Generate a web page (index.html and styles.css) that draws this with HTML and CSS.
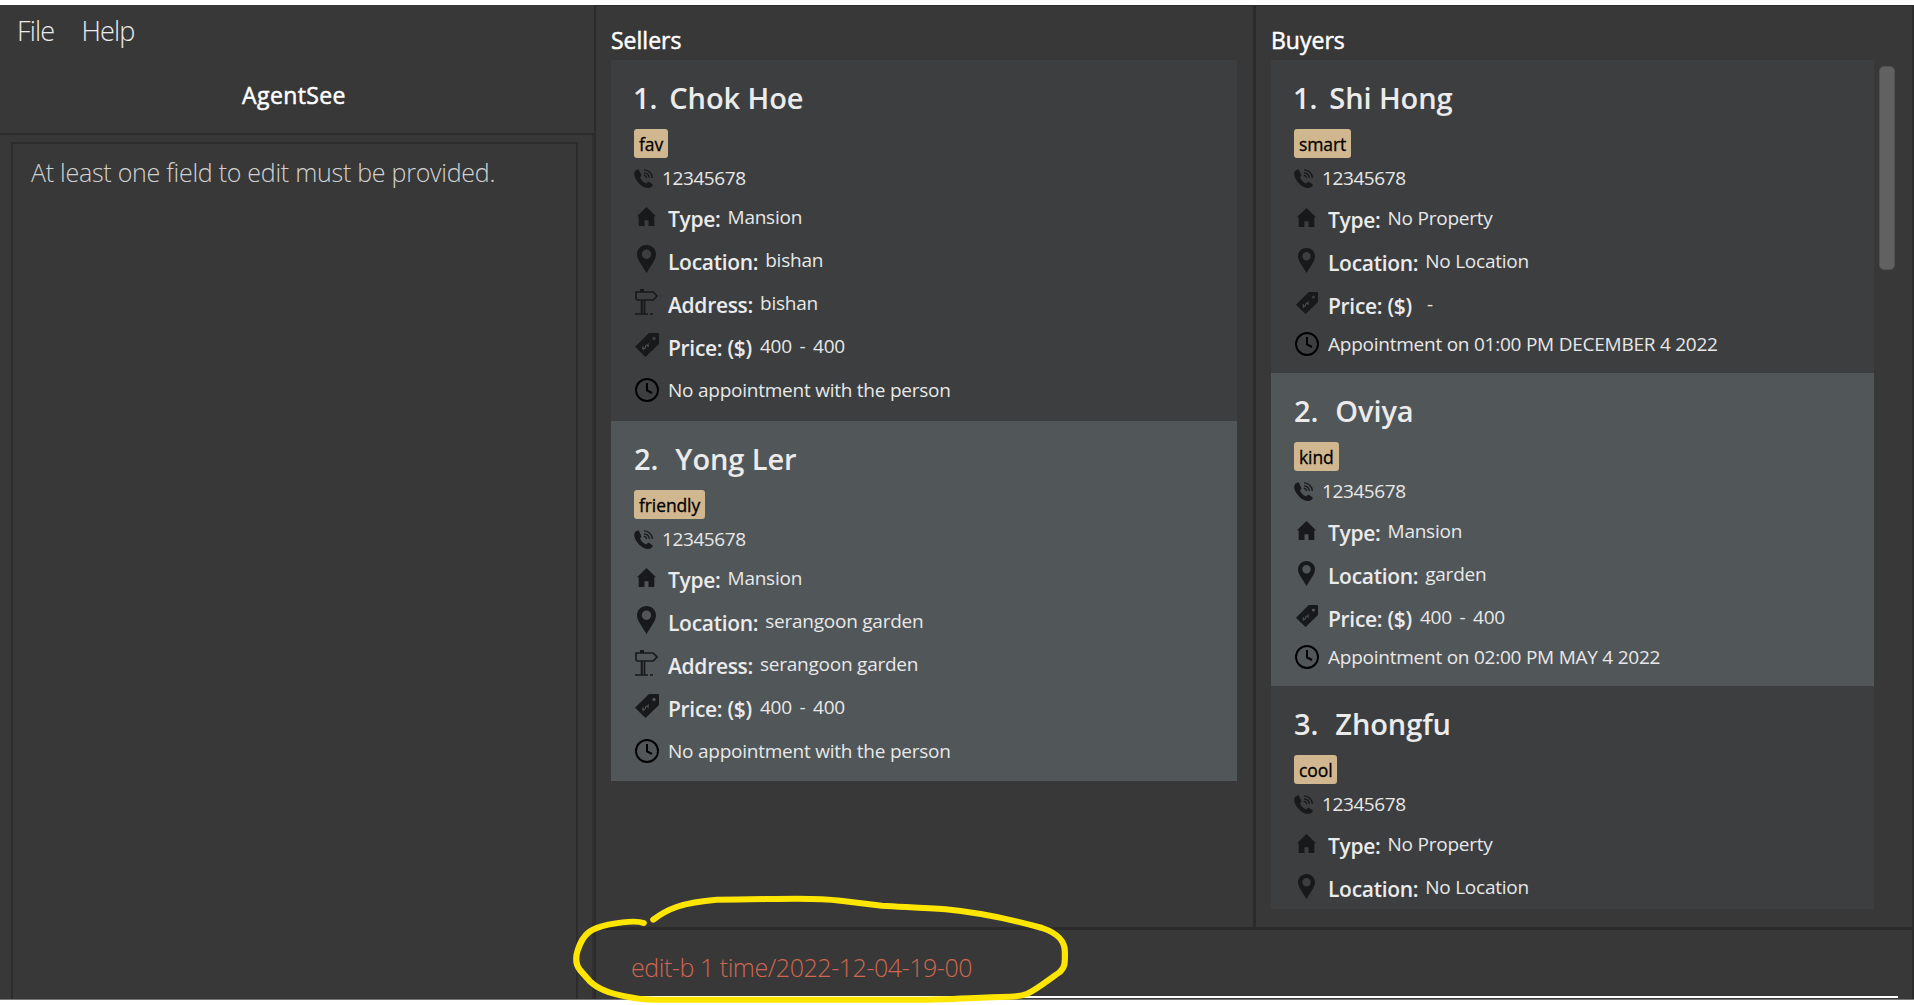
FILE: index.html
```
<!DOCTYPE html>
<html lang="en">
<head>
<meta charset="utf-8">
<title>AgentSee</title>
<link rel="stylesheet" href="styles.css">
</head>
<body>
<svg class="sprite" aria-hidden="true">
  <symbol id="phone" viewBox="0 0 19 19">
    <path d="M3.6.5 1 1.900C-.2 4-.1 6.600 1.300 9.300c2 4 5.200 7.300 9.100 9 2.800 1 5.300.9 7.200-.6.9-.8 1.300-1.600.9-2.400l-3.300-2.400c-.6-.3-1.200-.2-1.700.3l-1.300 1.300c-2.700-1-5.100-3.500-6.200-6.100l1-1.200c.4-.6.400-1.100.1-1.700L5 .9C4.600.300 4.100.200 3.600.5z" fill="currentColor"/>
    <path d="M10 .9c4.600.1 8.200 3.500 8.300 8M10 3.800c2.900.2 5.100 2.300 5.300 5.100M9.800 6.400c1.700.1 2.700 1.100 2.900 2.700" fill="none" stroke="currentColor" stroke-width="1.300"/>
  </symbol>
  <symbol id="house" viewBox="0 0 19 19">
    <path d="M9.500 0 19 9.300h-1.700V19h-5.800v-5.800h-4V19H1.700V9.300H0z" fill="currentColor"/>
  </symbol>
  <symbol id="pin" viewBox="0 0 19 28">
    <path fill-rule="evenodd" d="M9.500 0C4.200 0 0 4.100 0 9.300c0 2.400.8 4.500 2 6.700L9.500 28 17 16c1.200-2.200 2-4.300 2-6.700C19 4.100 14.800 0 9.500 0zm0 4.500a4.700 4.700 0 1 1 0 9.400 4.700 4.700 0 0 1 0-9.400z" fill="currentColor"/>
  </symbol>
  <symbol id="sign" viewBox="0 0 23 26">
    <path d="M1 3h17.200L22 7l-3.800 4H2.200L1 9.800zM6.700 11v13.500M9.500 11v13.500M0 25h13M15 25h3" fill="none" stroke="currentColor" stroke-width="1.700"/>
    <path d="M5 0h4v3H5zM5.900 12h1.600v12H5.900z" fill="currentColor"/>
  </symbol>
  <symbol id="tag" viewBox="0 0 24 24">
    <path fill-rule="evenodd" d="M14 0h8.500C23.500 0 24 .5 24 1.500V11L10.500 24 0 13.800zm5 3.800a1.700 1.700 0 1 0 0 3.400 1.700 1.700 0 0 0 0-3.400z" fill="currentColor"/>
    <path d="m8 13.300-.2 2.500 2.200-.3.900-3.200 2.200-.5v2.300M7.500 16.300l1 .7M13.200 11.300l1-.9" fill="none" stroke="#5a5d5e" stroke-width="1"/>
  </symbol>
  <symbol id="clock" viewBox="0 0 24 24">
    <circle cx="12" cy="12" r="11" fill="none" stroke="#000" stroke-width="1.900"/>
    <path d="M12 5v7.300l5 2.700" fill="none" stroke="#000" stroke-width="2"/>
  </symbol>
</svg>

<div class="app">
  <aside class="side">
    <header class="side-head">
      <nav class="menu"><span>File</span><span>Help</span></nav>
      <h1 class="brand">AgentSee</h1>
    </header>
    <div class="result-pane"><div class="result">At least one field to edit must be provided.</div></div>
  </aside>

  <main class="main">
    <div class="lists">
      <section class="panel sellers">
        <h2 class="panel-title">Sellers</h2>
        <div class="list">
          <article class="card">
            <h3 class="name"><span>1.</span><span>Chok Hoe</span></h3>
            <div class="tags"><span class="tag">fav</span></div>
            <div class="row phone"><svg class="i-phone"><use href="#phone"/></svg><span class="value">12345678</span></div>
            <div class="row"><i class="slot"><svg class="i-house"><use href="#house"/></svg></i><b>Type:</b><span class="value">Mansion</span></div>
            <div class="row"><i class="slot"><svg class="i-pin"><use href="#pin"/></svg></i><b>Location:</b><span class="value">bishan</span></div>
            <div class="row"><i class="slot"><svg class="i-sign"><use href="#sign"/></svg></i><b>Address:</b><span class="value">bishan</span></div>
            <div class="row"><i class="slot"><svg class="i-tag"><use href="#tag"/></svg></i><b>Price: ($)</b><span class="value range">400 - 400</span></div>
            <div class="row appt"><i class="slot"><svg class="i-clock"><use href="#clock"/></svg></i><span class="value">No appointment with the person</span></div>
          </article>
          <article class="card">
            <h3 class="name"><span>2.</span><span>Yong Ler</span></h3>
            <div class="tags"><span class="tag">friendly</span></div>
            <div class="row phone"><svg class="i-phone"><use href="#phone"/></svg><span class="value">12345678</span></div>
            <div class="row"><i class="slot"><svg class="i-house"><use href="#house"/></svg></i><b>Type:</b><span class="value">Mansion</span></div>
            <div class="row"><i class="slot"><svg class="i-pin"><use href="#pin"/></svg></i><b>Location:</b><span class="value">serangoon garden</span></div>
            <div class="row"><i class="slot"><svg class="i-sign"><use href="#sign"/></svg></i><b>Address:</b><span class="value">serangoon garden</span></div>
            <div class="row"><i class="slot"><svg class="i-tag"><use href="#tag"/></svg></i><b>Price: ($)</b><span class="value range">400 - 400</span></div>
            <div class="row appt"><i class="slot"><svg class="i-clock"><use href="#clock"/></svg></i><span class="value">No appointment with the person</span></div>
          </article>
        </div>
      </section>

      <section class="panel buyers">
        <h2 class="panel-title">Buyers</h2>
        <div class="scroll">
          <div class="list">
            <article class="card">
              <h3 class="name"><span>1.</span><span>Shi Hong</span></h3>
              <div class="tags"><span class="tag">smart</span></div>
              <div class="row phone"><svg class="i-phone"><use href="#phone"/></svg><span class="value">12345678</span></div>
              <div class="row"><i class="slot"><svg class="i-house"><use href="#house"/></svg></i><b>Type:</b><span class="value">No Property</span></div>
              <div class="row"><i class="slot"><svg class="i-pin"><use href="#pin"/></svg></i><b>Location:</b><span class="value">No Location</span></div>
              <div class="row"><i class="slot"><svg class="i-tag"><use href="#tag"/></svg></i><b>Price: ($)</b><span class="value range none">-</span></div>
              <div class="row appt"><i class="slot"><svg class="i-clock"><use href="#clock"/></svg></i><span class="value">Appointment on 01:00 PM DECEMBER 4 2022</span></div>
            </article>
            <article class="card">
              <h3 class="name"><span>2.</span><span>Oviya</span></h3>
              <div class="tags"><span class="tag">kind</span></div>
              <div class="row phone"><svg class="i-phone"><use href="#phone"/></svg><span class="value">12345678</span></div>
              <div class="row"><i class="slot"><svg class="i-house"><use href="#house"/></svg></i><b>Type:</b><span class="value">Mansion</span></div>
              <div class="row"><i class="slot"><svg class="i-pin"><use href="#pin"/></svg></i><b>Location:</b><span class="value">garden</span></div>
              <div class="row"><i class="slot"><svg class="i-tag"><use href="#tag"/></svg></i><b>Price: ($)</b><span class="value range">400 - 400</span></div>
              <div class="row appt"><i class="slot"><svg class="i-clock"><use href="#clock"/></svg></i><span class="value">Appointment on 02:00 PM MAY 4 2022</span></div>
            </article>
            <article class="card">
              <h3 class="name"><span>3.</span><span>Zhongfu</span></h3>
              <div class="tags"><span class="tag">cool</span></div>
              <div class="row phone"><svg class="i-phone"><use href="#phone"/></svg><span class="value">12345678</span></div>
              <div class="row"><i class="slot"><svg class="i-house"><use href="#house"/></svg></i><b>Type:</b><span class="value">No Property</span></div>
              <div class="row"><i class="slot"><svg class="i-pin"><use href="#pin"/></svg></i><b>Location:</b><span class="value">No Location</span></div>
            </article>
          </div>
          <div class="track"><div class="thumb"></div></div>
        </div>
      </section>
    </div>

    <footer class="command"><div class="field">edit-b 1 time/2022-12-04-19-00</div></footer>
  </main>
</div>

<svg class="marker" viewBox="0 0 1568 375" preserveAspectRatio="none">
  <path d="M271 119C310 88 355 67 455 59C560 59 620 56 690 56C730 56 775 57 815 62Q880 70 935 77C1000 81 1060 83 1120 88C1220 98 1310 118 1400 144C1445 160 1467 182 1466 218C1466 245 1468 262 1450 277C1415 302 1385 328 1357 341Q1335 350 1305 350C1200 353 1120 359 1040 359H280C240 360 215 355 190 349C135 339 105 322 88 305L58 270C45 253 45 230 52 209C68 160 90 145 140 134C180 126 225 122 243 129"/>
</svg>
</body>
</html>
```
FILE: styles.css
```
* { box-sizing: border-box; }

body {
  margin: 0;
  padding: 5px 0;
  height: 1005px;
  overflow: hidden;
  position: relative;
  background: #fff;
  color: #ebebeb;
  font-family: "Open Sans", "Noto Sans", sans-serif;
}

h1, h2, h3 { margin: 0; }

.sprite { display: none; }

.app {
  display: grid;
  grid-template-columns: 594px 1fr;
  height: 995px;
  background: #383838;
  border-bottom: 1px solid #777;
}

/* left column */
.side { display: flex; flex-direction: column; min-height: 0; }

.side-head {
  height: 130px;
  border-bottom: 2px solid #2c2c2c;
}

.menu {
  display: flex;
  gap: 27px;
  padding-left: 17px;
  height: 52px;
  font-size: 27px;
  font-weight: 300;
  letter-spacing: -0.8px;
  line-height: 51px;
  color: #ececec;
}

.brand {
  padding-right: 6px;
  font-size: 23px;
  font-weight: 400;
  letter-spacing: 0.4px;
  line-height: 76px;
  text-align: center;
  color: #fff;
  -webkit-text-stroke: 0.5px #fff;
}

.result-pane {
  flex: 1;
  display: flex;
  padding: 7px 14px 0 11px;
  border-right: 2px solid #2f2f2f;
}

.result {
  flex: 1;
  padding: 9px 18px;
  border: 2px solid #2c2c2c;
  border-bottom: 0;
  font-size: 25px;
  font-weight: 300;
  letter-spacing: -0.260px;
  line-height: 38px;
  color: #d2d2d2;
}

/* right area */
.main {
  display: flex;
  flex-direction: column;
  min-width: 0;
  min-height: 0;
  border-left: 2px solid #2b2b2b;
  border-right: 2px solid #2c2c2c;
  border-top: 1px solid #2c2c2c;
}

.lists {
  display: grid;
  grid-template-columns: 660px 1fr;
  height: 924px;
  border-bottom: 3px solid #2b2b2b;
}

.panel {
  display: flex;
  flex-direction: column;
  padding: 0 15px 18px;
  min-height: 0;
}

.sellers { padding-right: 16px; border-right: 3px solid #2b2b2b; }
.buyers { padding-right: 16px; }

.panel-title {
  height: 54px;
  padding-top: 12px;
  font-size: 23px;
  font-weight: 400;
  line-height: 44px;
  color: #fff;
  -webkit-text-stroke: 0.5px #fff;
}

.scroll { display: flex; flex: 1; min-height: 0; gap: 4px; }
.scroll .list { flex: 1; overflow: hidden; }

.track { width: 18px; padding: 6px 1px 0; }

.thumb {
  height: 204px;
  border: 1px solid #525252;
  border-radius: 5px;
  background: #616161;
}

/* cards */
.card {
  height: 361px;
  padding: 16px 0 0 23px;
  background: #3c3e3f;
}

.card:nth-child(even) { background: #515658; }
.sellers .card:nth-child(even) { height: 360px; }
.buyers .card { height: 313px; }

.name {
  display: flex;
  gap: 17px;
  height: 53px;
  font-size: 29px;
  font-weight: 600;
  letter-spacing: -0.1px;
  line-height: 44px;
}

/* the digit 1 sits tighter than the others */
.card:first-child .name { gap: 12px; margin-left: -1px; }

.tags { display: flex; height: 29px; }

.tag {
  padding: 0 5px;
  border-radius: 3px;
  background: #d1b78f;
  color: #000;
  font-size: 17.500px;
  letter-spacing: -0.1px;
  line-height: 31px;
  -webkit-text-stroke: 0.3px #000;
}

.row {
  display: flex;
  align-items: center;
  height: 43px;
  white-space: nowrap;
  color: #18191a;
}

.row b {
  margin: 0 7px 0 9px;
  font-size: 21px;
  font-weight: 600;
  letter-spacing: -0.300px;
  color: #ebebeb;
}

.row .value {
  font-size: 19px;
  letter-spacing: -0.240px;
  color: #e8e8e8;
}

.row b + .value { padding-bottom: 4px; }

.row.phone { height: 39px; gap: 9px; padding-top: 1px; }
.row.phone .value { letter-spacing: -0.400px; }
.buyers .row.phone { height: 40px; padding-top: 0; }

.row.appt { height: 41px; }
.buyers .row.appt { height: 33px; }
.appt .value { margin-left: 9px; }
.row.appt .slot { padding-bottom: 0; }

.row .range { word-spacing: 3px; margin-left: 1px; }
.none { padding-left: 7px; }

.slot {
  display: flex;
  justify-content: center;
  width: 25px;
  padding-bottom: 5px;
}

.i-phone { width: 19px; height: 19px; }
.i-house { width: 19px; height: 19px; }
.i-pin { width: 19px; height: 28px; }
.i-sign { width: 23px; height: 26px; }
.i-tag { width: 24px; height: 24px; }
.i-clock { width: 24px; height: 24px; }
.buyers .i-pin { width: 17px; height: 25px; }
.buyers .i-tag { width: 22px; height: 22px; }

/* command box */
.command { flex: 1; padding: 0 14px 0 35px; }

.field {
  height: 68px;
  padding-top: 15px;
  border-bottom: 2px solid #fff;
  font-size: 25px;
  font-weight: 300;
  letter-spacing: -0.450px;
  line-height: 44px;
  color: #d06651;
}

/* freehand highlight drawn over the command box */
.marker {
  position: absolute;
  left: 560px;
  top: 880px;
  width: 540px;
  height: 125px;
  fill: none;
  stroke: #ffe600;
  stroke-width: 18;
  stroke-linecap: round;
}
```
